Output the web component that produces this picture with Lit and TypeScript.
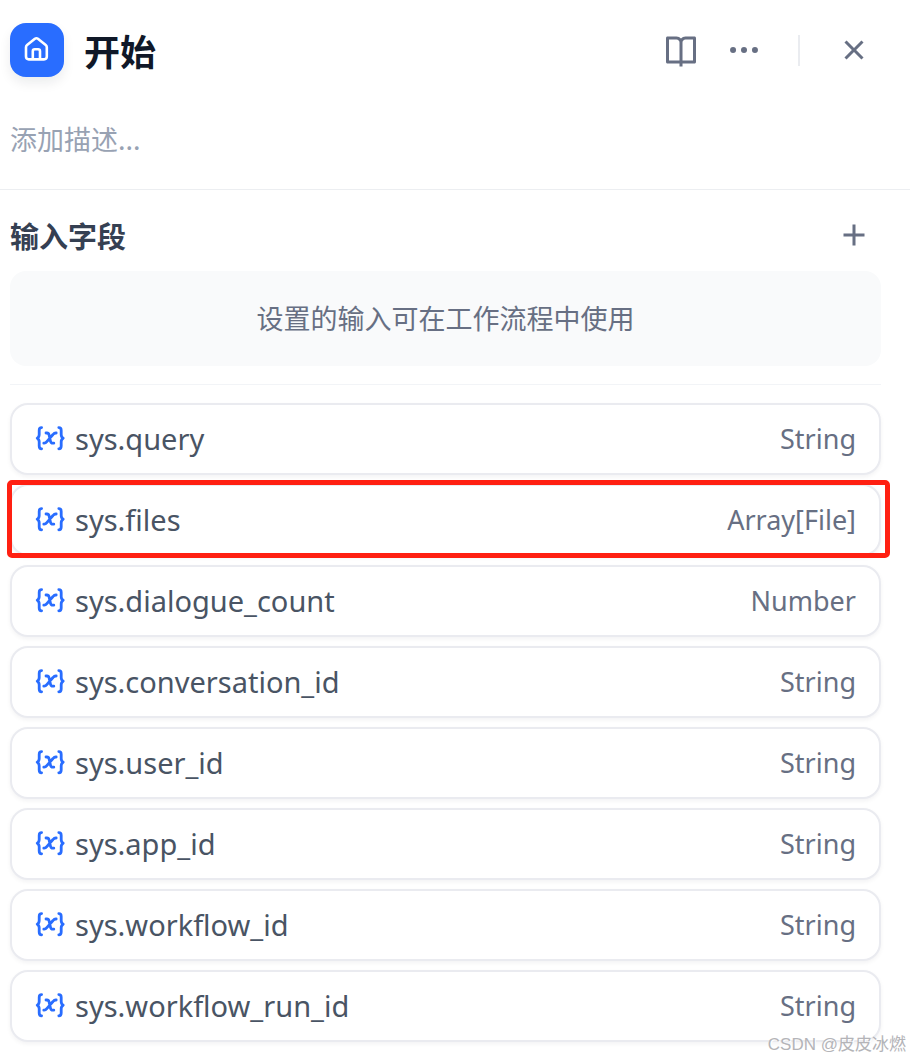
import { LitElement, html, css, svg } from "lit";
import { customElement, property } from "lit/decorators.js";

interface Variable {
  name: string;
  type: string;
  highlighted?: boolean;
}

const VARIABLES: Variable[] = [
  { name: "sys.query", type: "String" },
  { name: "sys.files", type: "Array[File]", highlighted: true },
  { name: "sys.dialogue_count", type: "Number" },
  { name: "sys.conversation_id", type: "String" },
  { name: "sys.user_id", type: "String" },
  { name: "sys.app_id", type: "String" },
  { name: "sys.workflow_id", type: "String" },
  { name: "sys.workflow_run_id", type: "String" },
];

const bookShape = svg`<path d="M13 21V23H11V21H3C2.45 21 2 20.55 2 20V4C2 3.45 2.45 3 3 3H9C10.2 3 11.27 3.52 12 4.35C12.73 3.52 13.8 3 15 3H21C21.55 3 22 3.45 22 4V20C22 20.55 21.55 21 21 21H13ZM20 19V5H15C13.9 5 13 5.9 13 7V19H20ZM11 19V7C11 5.9 10.1 5 9 5H4V19H11Z"/>`;
const moreShape = svg`<circle cx="4.7" cy="12" r="2"/><circle cx="12" cy="12" r="2"/><circle cx="19.3" cy="12" r="2"/>`;
const closeShape = svg`<path d="M12 10.587L16.95 5.637L18.364 7.051L13.414 12L18.364 16.95L16.95 18.364L12 13.414L7.05 18.364L5.636 16.95L10.586 12L5.636 7.05L7.05 5.636Z"/>`;
const addShape = svg`<path d="M11 11V5H13V11H19V13H13V19H11V13H5V11Z"/>`;

@customElement("variable-row")
export class VariableRow extends LitElement {
  @property() name = "";
  @property() type = "";
  @property({ type: Boolean }) highlighted = false;

  static styles = css`
    :host {
      display: block;
      position: relative;
    }
    .row {
      display: flex;
      align-items: center;
      gap: 10px;
      box-sizing: border-box;
      min-height: 72px;
      padding: 0 23px;
      border: 2px solid #eaebf0;
      border-radius: 18px;
      background: #fff;
      box-shadow: 0 2px 4px rgba(16, 24, 40, 0.05);
      font-variant-ligatures: none;
    }
    .icon {
      flex: none;
      width: 30px;
      height: 30px;
      fill: none;
      stroke: #296dff;
      stroke-width: 2.8;
      stroke-linecap: round;
      stroke-linejoin: round;
    }
    .name {
      flex: 1;
      color: #495464;
      font-size: 29px;
      line-height: 40px;
    }
    .type {
      color: #676f83;
      font-size: 27px;
      line-height: 40px;
    }
    .mark {
      position: absolute;
      inset: -4px -9px -2px -3px;
      border: 5px solid #ff2012;
      border-radius: 5px;
      pointer-events: none;
    }
  `;

  render() {
    return html`
      <div class="row">
        <svg class="icon" viewBox="0 0 30 30" aria-hidden="true">
          <path d="M6.6 3.6C4.7 3.6 4.2 4.6 4.2 6.4V10.6C4.2 12.6 3.6 13.5 2.2 14.2C3.6 14.9 4.2 15.8 4.2 17.8V22C4.2 23.8 4.7 24.8 6.6 24.8" />
          <path d="M23.8 3.6C25.7 3.6 26.2 4.6 26.2 6.4V10.6C26.2 12.6 26.8 13.5 28.2 14.2C26.8 14.9 26.2 15.8 26.2 17.8V22C26.2 23.8 25.7 24.8 23.8 24.8" />
          <path d="M11 9H12C13.2 9 13.8 9.7 14.1 11L15.5 17.2C15.8 18.5 16.5 19.2 17.7 19.2H18.8M21.2 9H20.8C19.6 9 18.8 9.5 18 10.5L11.8 17.7C11 18.7 10.4 19.2 9.2 19.2H8.8" />
        </svg>
        <span class="name">${this.name}</span>
        <span class="type">${this.type}</span>
      </div>
      ${this.highlighted ? html`<div class="mark"></div>` : null}
    `;
  }
}

@customElement("app-root")
export class AppRoot extends LitElement {
  static styles = css`
    :host {
      display: block;
      position: relative;
      min-height: 100vh;
      overflow: hidden;
      box-sizing: border-box;
      background: #fff;
      font-family: "Noto Sans", "Noto Sans CJK SC", sans-serif;
    }
    .header {
      padding: 23px 29px 30px 10px;
      border-bottom: 1px solid #eceef1;
    }
    .heading {
      display: flex;
      align-items: center;
    }
    .badge {
      display: flex;
      align-items: center;
      justify-content: center;
      flex: none;
      width: 54px;
      height: 54px;
      border-radius: 16px;
      background: #296dff;
      box-shadow: 0 6px 12px rgba(16, 24, 40, 0.08);
    }
    .home {
      width: 28px;
      height: 28px;
      fill: none;
      stroke: #fff;
      stroke-width: 2.6;
      stroke-linejoin: round;
    }
    .title {
      flex: 1;
      margin: 0 0 0 20px;
      color: #101828;
      font: 700 36px/52px "Noto Sans CJK SC", sans-serif;
    }
    .tools {
      display: flex;
      align-items: center;
    }
    .tool {
      display: flex;
      flex: none;
      padding: 9px;
      border: 0;
      background: none;
      cursor: pointer;
    }
    .glyph {
      width: 36px;
      height: 36px;
      fill: #676f83;
    }
    .tool + .tool {
      margin-left: 9px;
    }
    .divider {
      width: 2px;
      height: 31px;
      margin: 0 27px;
      background: #eaecf0;
    }
    .description {
      display: block;
      box-sizing: border-box;
      width: 100%;
      height: 40px;
      margin-top: 42px;
      padding: 0;
      border: 0;
      outline: 0;
      background: none;
      color: #354052;
      font: 400 27px/40px "Noto Sans CJK SC", sans-serif;
    }
    .description::placeholder {
      color: #98a2b3;
      opacity: 1;
    }
    .fields {
      padding: 18px 29px 18px 10px;
    }
    .bar {
      display: flex;
      align-items: center;
      justify-content: space-between;
      height: 54px;
    }
    .subtitle {
      margin: 0;
      color: #354052;
      font: 700 29px/40px "Noto Sans CJK SC", sans-serif;
    }
    .empty {
      margin: 9px 0 18px;
      padding: 26px 27px 28px;
      border-radius: 16px;
      background: #f9fafb;
      color: #676f83;
      text-align: center;
      font: 400 27px/41px "Noto Sans CJK SC", sans-serif;
    }
    .list {
      display: flex;
      flex-direction: column;
      gap: 9px;
      margin: 0;
      padding: 18px 0 0;
      border-top: 1px solid #f2f4f7;
      list-style: none;
    }
    .watermark {
      position: absolute;
      right: 4px;
      bottom: 3px;
      color: #b4b4b8;
      font: 400 17px/24px "Liberation Sans", "Noto Sans CJK SC", sans-serif;
      text-shadow: 1px 1px 0 #fff;
    }
  `;

  private tool(label: string, shape: unknown) {
    return html`<button class="tool" type="button" aria-label=${label}>
      <svg class="glyph" viewBox="0 0 24 24" aria-hidden="true">${shape}</svg>
    </button>`;
  }

  render() {
    return html`
      <header class="header">
        <div class="heading">
          <div class="badge">
            <svg class="home" viewBox="0 0 28 28" aria-hidden="true">
              <path d="M3 11.2C3 10.3 3.4 9.6 4.1 9L11.9 2.8C12.8 2.1 14 2.1 14.9 2.8L22.7 9C23.4 9.6 23.8 10.3 23.8 11.2V20.6C23.8 22.4 22.8 23.4 21 23.4H5.8C4 23.4 3 22.4 3 20.6Z" />
              <path d="M9.8 23.4V15.2C9.8 14 10.5 13.3 11.7 13.3H15.1C16.3 13.3 17 14 17 15.2V23.4" />
            </svg>
          </div>
          <h1 class="title">开始</h1>
          <div class="tools">
            ${this.tool("帮助文档", bookShape)} ${this.tool("更多", moreShape)}
            <div class="divider"></div>
            ${this.tool("关闭", closeShape)}
          </div>
        </div>
        <input class="description" type="text" aria-label="描述" placeholder="添加描述..." />
      </header>
      <main class="fields">
        <div class="bar">
          <h2 class="subtitle">输入字段</h2>
          ${this.tool("添加", addShape)}
        </div>
        <div class="empty">设置的输入可在工作流程中使用</div>
        <ul class="list">
          ${VARIABLES.map(
            (v) => html`<li>
              <variable-row .name=${v.name} .type=${v.type} ?highlighted=${v.highlighted}></variable-row>
            </li>`,
          )}
        </ul>
      </main>
      <div class="watermark">CSDN @皮皮冰燃</div>
    `;
  }
}
